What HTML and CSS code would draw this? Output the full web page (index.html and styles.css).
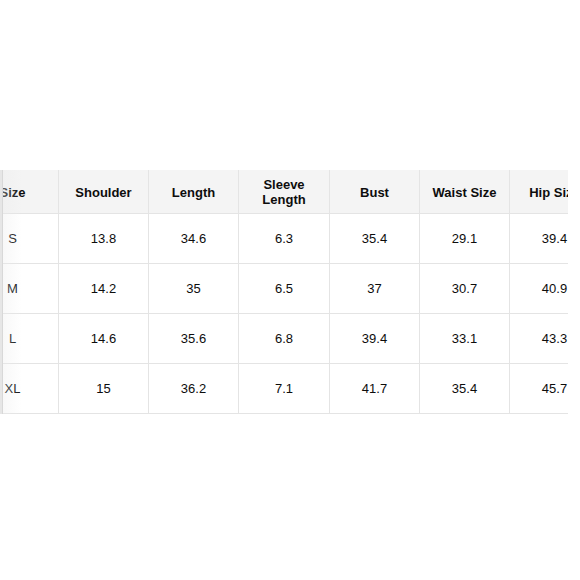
FILE: index.html
```html
<!DOCTYPE html>
<html>
<head>
<meta charset="utf-8">
<link rel="stylesheet" href="styles.css">
</head>
<body>
<div class="page">
  <div class="frame">
    <table class="chart">
      <colgroup>
        <col class="c-first"><col class="c"><col class="c"><col class="c-wide"><col class="c"><col class="c"><col class="c">
      </colgroup>
      <thead>
        <tr>
          <th>Size</th><th>Shoulder</th><th>Length</th><th>Sleeve<br>Length</th><th>Bust</th><th>Waist Size</th><th>Hip Size</th>
        </tr>
      </thead>
      <tbody>
        <tr><td>S</td><td>13.8</td><td>34.6</td><td>6.3</td><td>35.4</td><td>29.1</td><td>39.4</td></tr>
        <tr><td>M</td><td>14.2</td><td>35</td><td>6.5</td><td>37</td><td>30.7</td><td>40.9</td></tr>
        <tr><td>L</td><td>14.6</td><td>35.6</td><td>6.8</td><td>39.4</td><td>33.1</td><td>43.3</td></tr>
        <tr><td>XL</td><td>15</td><td>36.2</td><td>7.1</td><td>41.7</td><td>35.4</td><td>45.7</td></tr>
      </tbody>
    </table>
    <div class="shade"></div>
  </div>
</div>
</body>
</html>
```
FILE: styles.css
```css
html, body {
  margin: 0;
  padding: 0;
  background: #ffffff;
}
.page {
  width: 580px;
  height: 580px;
  padding-top: 170px;
  box-sizing: border-box;
}
.frame {
  position: relative;
  width: 568px;
  overflow: hidden;
}
.chart {
  border-collapse: collapse;
  table-layout: fixed;
  margin-left: -34px;
  width: 632px;
  font-family: "Liberation Sans", Arial, sans-serif;
  font-size: 13px;
  color: #0d0d0d;
}
.c-first { width: 92px; }
.c { width: 90px; }
.c-wide { width: 91px; }
.chart th, .chart td {
  border: 1px solid #e4e4e4;
  text-align: center;
  vertical-align: middle;
  padding: 0;
}
.chart th {
  background: #f4f4f4;
  font-weight: bold;
  height: 42px;
  line-height: 15px;
}
.chart td {
  height: 49px;
}
.chart thead tr th {
  border-top-color: #f4f4f4;
}
.shade {
  position: absolute;
  left: 0;
  top: 0;
  bottom: 0;
  width: 22px;
  background: linear-gradient(to right, #e6e6e6 0, #e6e6e6 2px, #d8d8d8 2px, #d8d8d8 3px, rgba(235,235,235,0.35) 3px, rgba(255,255,255,0) 22px);
  pointer-events: none;
}
```
